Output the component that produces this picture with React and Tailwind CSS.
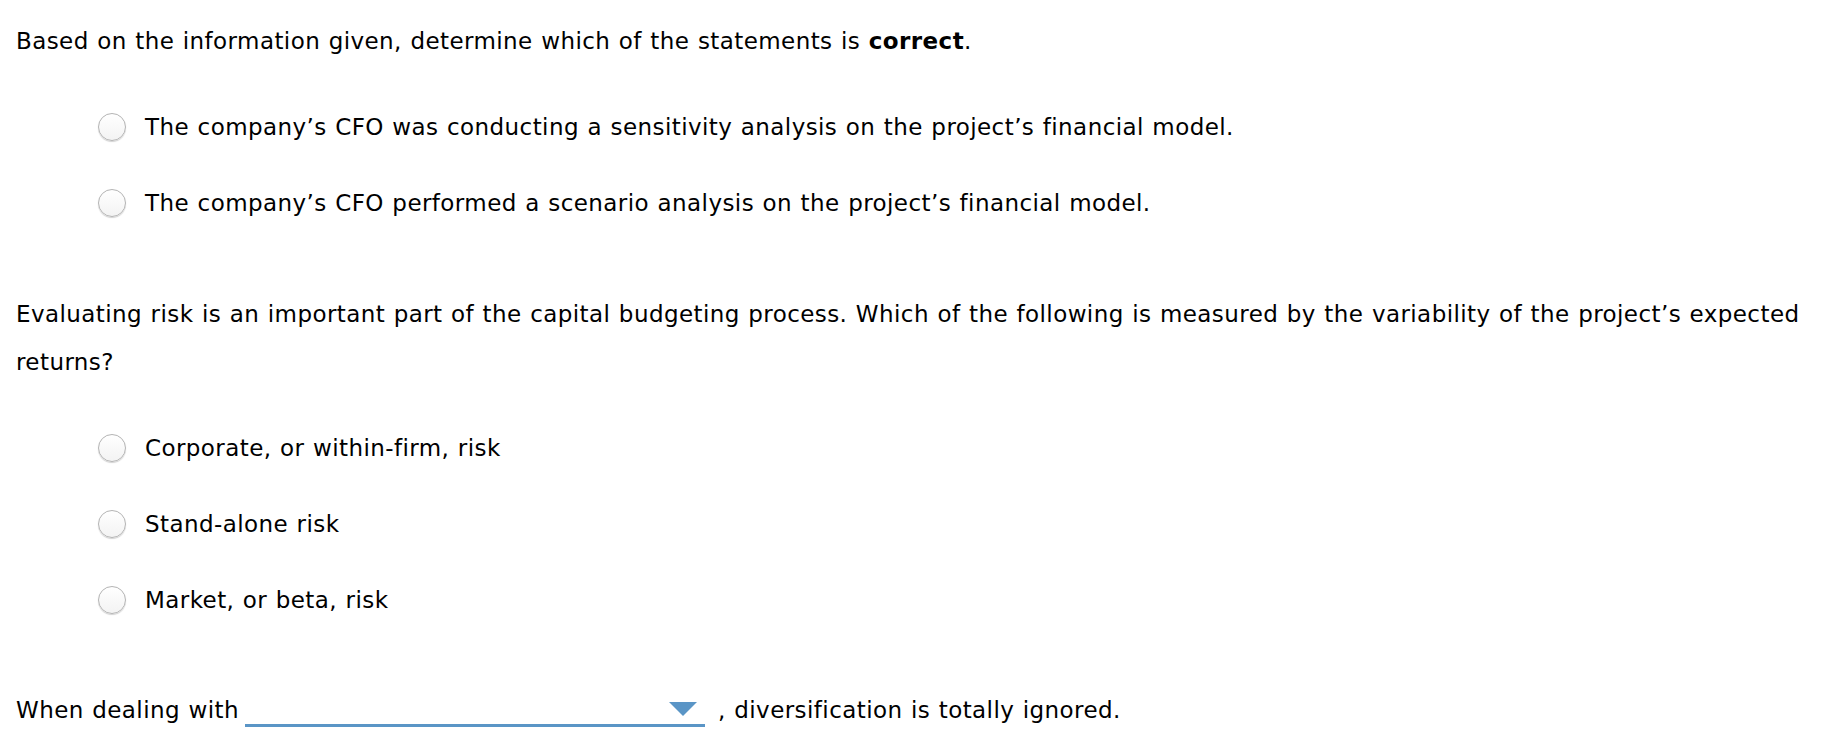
import React from "react";

const font = { fontFamily: '"DejaVu Sans", Verdana, sans-serif' };

// Single radio option row
const Option = ({ label }) => (
  <div className="flex h-[76px] items-center pl-[82px]">
    <span className="h-[28px] w-[28px] shrink-0 rounded-full border border-[#b4b4b4] bg-gradient-to-b from-white to-[#f3f3f3] shadow-[0_1px_1px_rgba(0,0,0,0.18)]" />
    <span className="ml-[19px] leading-[48px]">{label}</span>
  </div>
);

const App = () => {
  return (
    <div
      className="min-h-screen bg-white pl-[16px] pt-[17px] text-[23px] tracking-[0.42px] text-black [word-spacing:0.8px]"
      style={font}
    >
      <p className="leading-[48px]">
        Based on the information given, determine which of the statements is{" "}
        <b>correct</b>.
      </p>

      <div className="mt-[24px]">
        <Option label="The company’s CFO was conducting a sensitivity analysis on the project’s financial model." />
        <Option label="The company’s CFO performed a scenario analysis on the project’s financial model." />
      </div>

      <p className="mt-[49px] whitespace-nowrap leading-[48px]">
        Evaluating risk is an important part of the capital budgeting process.
        Which of the following is measured by the variability of the project’s
        expected
        <br />
        returns?
      </p>

      <div className="mt-[24px]">
        <Option label="Corporate, or within-firm, risk" />
        <Option label="Stand-alone risk" />
        <Option label="Market, or beta, risk" />
      </div>

      <div className="mt-[48px] flex items-start">
        <span className="leading-[48px]">When dealing with</span>
        <div className="ml-[6px] flex h-[41px] w-[460px] items-end justify-end border-b-[3px] border-[#5a95c6] pb-[8px] pr-[8px]">
          <svg width="28" height="14" viewBox="0 0 28 14">
            <polygon points="0,0 28,0 14,14" fill="#5a95c6" />
          </svg>
        </div>
        <span className="ml-[13px] leading-[48px]">
          , diversification is totally ignored.
        </span>
      </div>
    </div>
  );
};

export default App;
